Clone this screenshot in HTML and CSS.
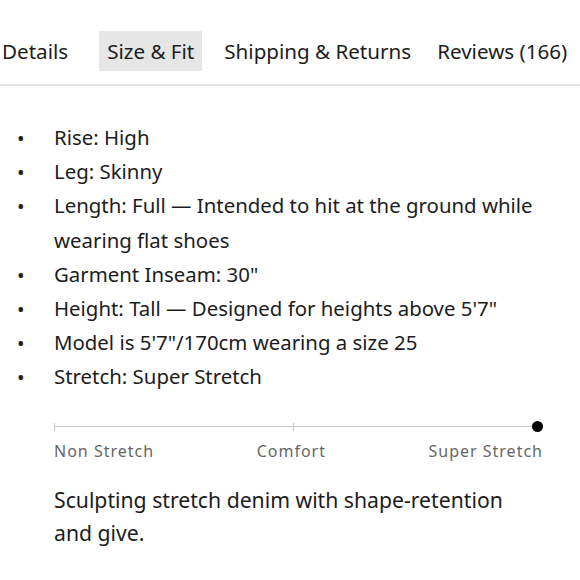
FILE: index.html
```html
<!DOCTYPE html>
<html>
<head>
<meta charset="utf-8">
<link rel="stylesheet" href="styles.css">
</head>
<body>
<div class="panel">
  <nav class="tabs">
    <span class="tab first">Details</span>
    <span class="tab active">Size &amp; Fit</span>
    <span class="tab">Shipping &amp; Returns</span>
    <span class="tab last">Reviews (166)</span>
  </nav>
  <div class="content">
    <ul class="specs">
      <li>Rise: High</li>
      <li>Leg: Skinny</li>
      <li>Length: Full — Intended to hit at the ground while wearing flat shoes</li>
      <li>Garment Inseam: 30"</li>
      <li>Height: Tall — Designed for heights above 5'7"</li>
      <li>Model is 5'7"/170cm wearing a size 25</li>
      <li>Stretch: Super Stretch</li>
    </ul>
    <div class="stretch">
      <div class="track">
        <span class="tick"></span>
        <span class="tick mid"></span>
        <span class="dot"></span>
      </div>
      <div class="labels">
        <span>Non Stretch</span>
        <span>Comfort</span>
        <span>Super Stretch</span>
      </div>
    </div>
    <p class="desc">Sculpting stretch denim with shape-retention and give.</p>
  </div>
</div>
</body>
</html>
```
FILE: styles.css
```css
html, body { margin: 0; padding: 0; background: #fff; }
body { font-family: "Noto Sans", "Liberation Sans", sans-serif; color: #1c1c1c; }
.panel { width: 580px; }
.tabs {
  display: flex;
  gap: 14px;
  padding-top: 31px;
  padding-bottom: 13px;
  border-bottom: 2px solid #e3e3e3;
}
.tab {
  font-size: 20.6px;
  line-height: 39px;
  padding: 1px 8px 0;
  white-space: nowrap;
}
.tab.first { margin-left: -6px; margin-right: 9px; }
.tab.last { margin-left: -4px; }
.tab.active { background: #e6e6e6; }
.content { padding: 0 37px 0 54px; }
.specs { list-style: none; margin: 34px 0 0 -54px; padding: 0; }
.specs li {
  display: flex;
  font-size: 20.4px;
  line-height: 34.2px;
}
.specs li::before {
  content: "•";
  flex: 0 0 54px;
  box-sizing: border-box;
  padding-left: 17px;
  font-size: 20px;
  position: relative;
  top: 2px;
}
.stretch { margin-top: 27px; }
.track {
  display: flex;
  align-items: center;
  justify-content: space-between;
  height: 12px;
  background: linear-gradient(#c8c8c8, #c8c8c8) left center / 100% 1px no-repeat;
  margin-right: 5px;
}
.tick { width: 1px; height: 8px; background: #c8c8c8; }
.dot { width: 11px; height: 11px; border-radius: 50%; background: #000; margin-right: -5px; }
.labels {
  display: flex;
  justify-content: space-between;
  margin-top: 8px;
  font-size: 16px;
  line-height: 20px;
  color: #666;
  letter-spacing: 1px;
}
.desc {
  margin: 22px 0 0;
  font-size: 21.2px;
  line-height: 33px;
}
```
